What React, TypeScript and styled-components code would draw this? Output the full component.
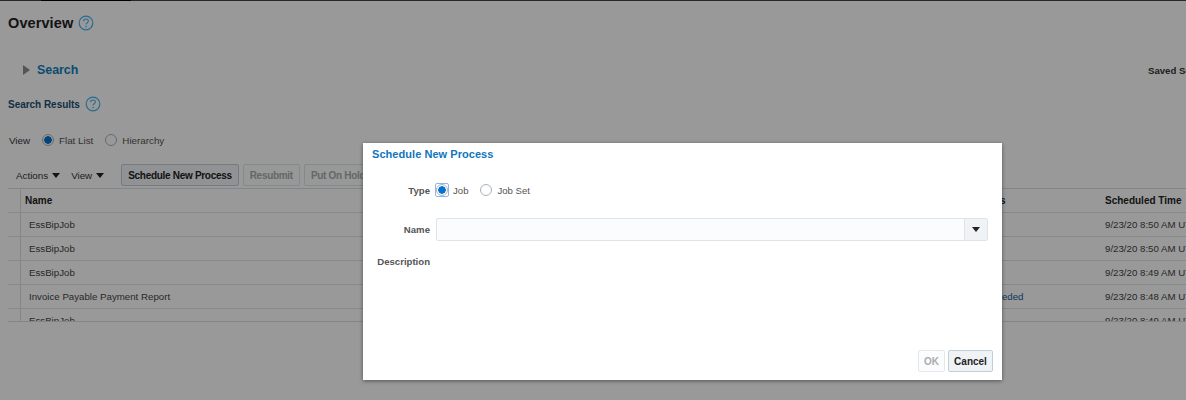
import * as React from "react";
import styled, { createGlobalStyle } from "styled-components";

const GlobalStyle = createGlobalStyle`
  html, body {
    margin: 0;
    padding: 0;
    background: #fff;
  }
  * {
    box-sizing: border-box;
  }
`;

const SPage = styled.div`
  position: relative;
  width: 1186px;
  height: 400px;
  overflow: hidden;
  background: #fff;
  color: #333;
  font-family: "Liberation Sans", Arial, sans-serif;
  font-size: 10px;
`;

const STopBar = styled.div`
  height: 1px;
  background: #444;
  padding-left: 41px;
  &::before {
    content: "";
    display: block;
    width: 90px;
    height: 1px;
    background: #000;
  }
`;

const SContent = styled.div`
  padding: 0 0 0 8px;
  display: flex;
  flex-direction: column;
`;

const STitleRow = styled.div`
  height: 20px;
  margin-top: 12px;
  display: flex;
  align-items: center;
  gap: 5px;
`;

const STitle = styled.h1`
  margin: 0;
  font-size: 14.5px;
  font-weight: bold;
  letter-spacing: 0.1px;
  color: #222;
`;

const SHelpIcon = styled.svg`
  display: block;
  flex: none;
`;

const SSearchRow = styled.div`
  height: 20px;
  margin-top: 27px;
  padding-left: 15px;
  display: flex;
  align-items: center;
  justify-content: space-between;
`;

const SSearchToggle = styled.div`
  display: flex;
  align-items: center;
  gap: 7px;
`;

const STriangle = styled.div`
  width: 0;
  height: 0;
  border-style: solid;
  border-width: 5.5px 0 5.5px 7px;
  border-color: transparent transparent transparent #8e8e8e;
`;

const SSearchTitle = styled.h2`
  margin: 0;
  font-size: 12.4px;
  font-weight: bold;
  color: #1080bd;
`;

const SSavedSearch = styled.div`
  width: 38px;
  white-space: nowrap;
  font-weight: bold;
  font-size: 9.6px;
  color: #333;
`;

const SResultsRow = styled.div`
  height: 18px;
  margin-top: 15px;
  display: flex;
  align-items: center;
  gap: 5px;
`;

const SResultsTitle = styled.h3`
  margin: 0;
  font-size: 10px;
  font-weight: bold;
  letter-spacing: -0.03px;
  color: #1d4f72;
`;

const SViewRow = styled.div`
  height: 16px;
  margin-top: 19px;
  padding-left: 1px;
  display: flex;
  align-items: center;
  font-size: 9.8px;
`;

const SViewLabel = styled.span`
  width: 33px;
  color: #333;
`;

const SRadioOption = styled.span`
  display: inline-flex;
  align-items: center;
  gap: 5px;
  margin-right: 12px;
  color: #555;
`;

const SRadio = styled.span<{ checked?: boolean }>`
  display: block;
  width: 12px;
  height: 12px;
  flex: none;
  border-radius: 50%;
  border: 1px solid #a9b3bc;
  background: ${({ checked }) =>
    checked ? "radial-gradient(circle, #0572ce 0 3.5px, #fff 4px)" : "#fff"};
`;

const SRadioFocus = styled.span`
  display: block;
  flex: none;
  margin: -1px;
  border: 1px solid #8fb4f0;
  border-radius: 2px;
`;

const SToolbar = styled.div`
  height: 22px;
  margin-top: 16px;
  padding-left: 8px;
  display: flex;
  align-items: center;
  gap: 4px;
`;

const SMenus = styled.div`
  display: flex;
  align-items: center;
  gap: 11px;
  margin-right: 13px;
`;

const SMenu = styled.span`
  display: inline-flex;
  align-items: center;
  gap: 4px;
  font-size: 9.8px;
  color: #333;
`;

const SMenuCaret = styled.span`
  width: 0;
  height: 0;
  border-style: solid;
  border-width: 5px 4px 0;
  border-color: #222 transparent transparent;
`;

const SToolButton = styled.button<{ disabled?: boolean }>`
  height: 22px;
  padding: 0 6px;
  font-family: inherit;
  font-size: 10px;
  font-weight: bold;
  letter-spacing: -0.3px;
  white-space: nowrap;
  border-radius: 2px;
  border: 1px solid ${({ disabled }) => (disabled ? "#dfe4e8" : "#c4ced7")};
  background: ${({ disabled }) => (disabled ? "#fcfdfe" : "#f0f3f6")};
  color: ${({ disabled }) => (disabled ? "#ababab" : "#222")};
`;

const STable = styled.div`
  width: 1300px;
  height: 134px;
  margin-top: 2px;
  overflow: hidden;
  border-top: 1px solid #d6dfe6;
  border-bottom: 1px solid #d6dfe6;
`;

const SRow = styled.div<{ header?: boolean }>`
  display: grid;
  grid-template-columns: 12px 950px 130px 1fr;
  height: 24px;
  align-items: center;
  border-bottom: 1px solid #dfe4e8;
  font-size: ${({ header }) => (header ? "10px" : "9.7px")};
  font-weight: ${({ header }) => (header ? "bold" : "normal")};
  color: ${({ header }) => (header ? "#222" : "#444")};
`;

const SCell = styled.div<{ first?: boolean; header?: boolean }>`
  height: 100%;
  display: flex;
  align-items: center;
  padding-left: ${({ first, header }) =>
    first ? (header ? "4px" : "8px") : "5px"};
  white-space: nowrap;
  border-left: ${({ first }) => (first ? "1px solid #d6dfe6" : "none")};
`;

const SStatusLink = styled.span`
  color: #145c9e;
`;

const SOverlay = styled.div`
  position: absolute;
  inset: 0;
  background: rgba(0, 0, 0, 0.4);
`;

const SDialog = styled.div`
  position: absolute;
  left: 363px;
  top: 143px;
  width: 639px;
  height: 237px;
  background: #fff;
  box-shadow: 0 1px 4px rgba(0, 0, 0, 0.45);
  padding: 5px 9px 8px 9px;
  display: flex;
  flex-direction: column;
`;

const SDialogTitle = styled.h4`
  margin: 0;
  height: 13px;
  line-height: 13px;
  font-size: 11px;
  font-weight: bold;
  letter-spacing: 0.05px;
  color: #0f75bc;
`;

const SForm = styled.div`
  display: grid;
  grid-template-columns: 58px 1fr;
  column-gap: 6px;
  margin-top: 21px;
  margin-right: 5px;
`;

const SLabel = styled.div<{ rowHeight: number }>`
  height: ${({ rowHeight }) => rowHeight}px;
  display: flex;
  align-items: center;
  justify-content: flex-end;
  white-space: nowrap;
  font-size: 9.6px;
  font-weight: bold;
  color: #555;
`;

const SField = styled.div<{ rowHeight: number }>`
  height: ${({ rowHeight }) => rowHeight}px;
  display: flex;
  align-items: center;
`;

const STypeOption = styled.span`
  display: inline-flex;
  align-items: center;
  gap: 5px;
  margin-right: 12px;
  font-size: 9.6px;
  color: #555;
`;

const SCombo = styled.div`
  width: 100%;
  height: 23px;
  display: flex;
  border: 1px solid #dfe4e8;
  border-radius: 2px;
  background: #fbfcfd;
`;

const SComboInput = styled.div`
  flex: 1;
`;

const SComboButton = styled.div`
  width: 23px;
  display: flex;
  align-items: center;
  justify-content: center;
  border-left: 1px solid #dfe4e8;
  background: #f0f3f6;
`;

const SSpacer = styled.div<{ size: number }>`
  grid-column: 1 / -1;
  height: ${({ size }) => size}px;
`;

const SFooter = styled.div`
  margin-top: auto;
  display: flex;
  justify-content: flex-end;
  gap: 3px;
`;

const SDialogButton = styled.button<{ disabled?: boolean }>`
  height: 22px;
  padding: 0;
  width: ${({ disabled }) => (disabled ? "27px" : "45px")};
  font-family: inherit;
  font-size: 10px;
  font-weight: bold;
  border-radius: 2px;
  border: 1px solid ${({ disabled }) => (disabled ? "#e4e8ec" : "#c4ced7")};
  background: ${({ disabled }) => (disabled ? "#fbfcfd" : "#f0f3f6")};
  color: ${({ disabled }) => (disabled ? "#ababab" : "#222")};
`;

const HelpIcon = () => (
  <SHelpIcon width={16} height={16} viewBox="0 0 16 16" fill="none">
    <circle cx="8" cy="8" r="6.8" stroke="#45b4f0" strokeWidth="1.2" />
    <path
      d="M5.6 6.2C5.6 4.8 6.7 4 8 4c1.4 0 2.4.9 2.4 2 0 1.7-2.4 1.8-2.4 3.6"
      stroke="#45b4f0"
      strokeWidth="1.1"
    />
    <circle cx="8" cy="11.6" r="0.8" fill="#45b4f0" />
  </SHelpIcon>
);

interface IJobRow {
  name: string;
  status: string;
  time: string;
}

const rows: IJobRow[] = [
  { name: "EssBipJob", status: "", time: "9/23/20 8:50 AM UTC" },
  { name: "EssBipJob", status: "", time: "9/23/20 8:50 AM UTC" },
  { name: "EssBipJob", status: "", time: "9/23/20 8:49 AM UTC" },
  { name: "Invoice Payable Payment Report", status: "Succeeded", time: "9/23/20 8:48 AM UTC" },
  { name: "EssBipJob", status: "", time: "9/23/20 8:49 AM UTC" }
];

const App = () => (
  <SPage>
    <GlobalStyle />
    <STopBar />
    <SContent>
      <STitleRow>
        <STitle>Overview</STitle>
        <HelpIcon />
      </STitleRow>
      <SSearchRow>
        <SSearchToggle>
          <STriangle />
          <SSearchTitle>Search</SSearchTitle>
        </SSearchToggle>
        <SSavedSearch>Saved Search</SSavedSearch>
      </SSearchRow>
      <SResultsRow>
        <SResultsTitle>Search Results</SResultsTitle>
        <HelpIcon />
      </SResultsRow>
      <SViewRow>
        <SViewLabel>View</SViewLabel>
        <SRadioOption>
          <SRadio checked />
          Flat List
        </SRadioOption>
        <SRadioOption>
          <SRadio />
          Hierarchy
        </SRadioOption>
      </SViewRow>
      <SToolbar>
        <SMenus>
          <SMenu>
            Actions <SMenuCaret />
          </SMenu>
          <SMenu>
            View <SMenuCaret />
          </SMenu>
        </SMenus>
        <SToolButton>Schedule New Process</SToolButton>
        <SToolButton disabled>Resubmit</SToolButton>
        <SToolButton disabled>Put On Hold</SToolButton>
      </SToolbar>
      <STable>
        <SRow header>
          <SCell />
          <SCell first header>
            Name
          </SCell>
          <SCell>Status</SCell>
          <SCell>Scheduled Time</SCell>
        </SRow>
        {rows.map((row, index) => (
          <SRow key={index}>
            <SCell />
            <SCell first>{row.name}</SCell>
            <SCell>
              <SStatusLink>{row.status}</SStatusLink>
            </SCell>
            <SCell>{row.time}</SCell>
          </SRow>
        ))}
      </STable>
    </SContent>
    <SOverlay />
    <SDialog>
      <SDialogTitle>Schedule New Process</SDialogTitle>
      <SForm>
        <SLabel rowHeight={16}>Type</SLabel>
        <SField rowHeight={16}>
          <STypeOption>
            <SRadioFocus>
              <SRadio checked />
            </SRadioFocus>
            Job
          </STypeOption>
          <STypeOption>
            <SRadio />
            Job Set
          </STypeOption>
        </SField>
        <SSpacer size={20} />
        <SLabel rowHeight={23}>Name</SLabel>
        <SField rowHeight={23}>
          <SCombo>
            <SComboInput />
            <SComboButton>
              <SMenuCaret />
            </SComboButton>
          </SCombo>
        </SField>
        <SSpacer size={13} />
        <SLabel rowHeight={14}>Description</SLabel>
        <SField rowHeight={14} />
      </SForm>
      <SFooter>
        <SDialogButton disabled>OK</SDialogButton>
        <SDialogButton>Cancel</SDialogButton>
      </SFooter>
    </SDialog>
  </SPage>
);

export default App;
